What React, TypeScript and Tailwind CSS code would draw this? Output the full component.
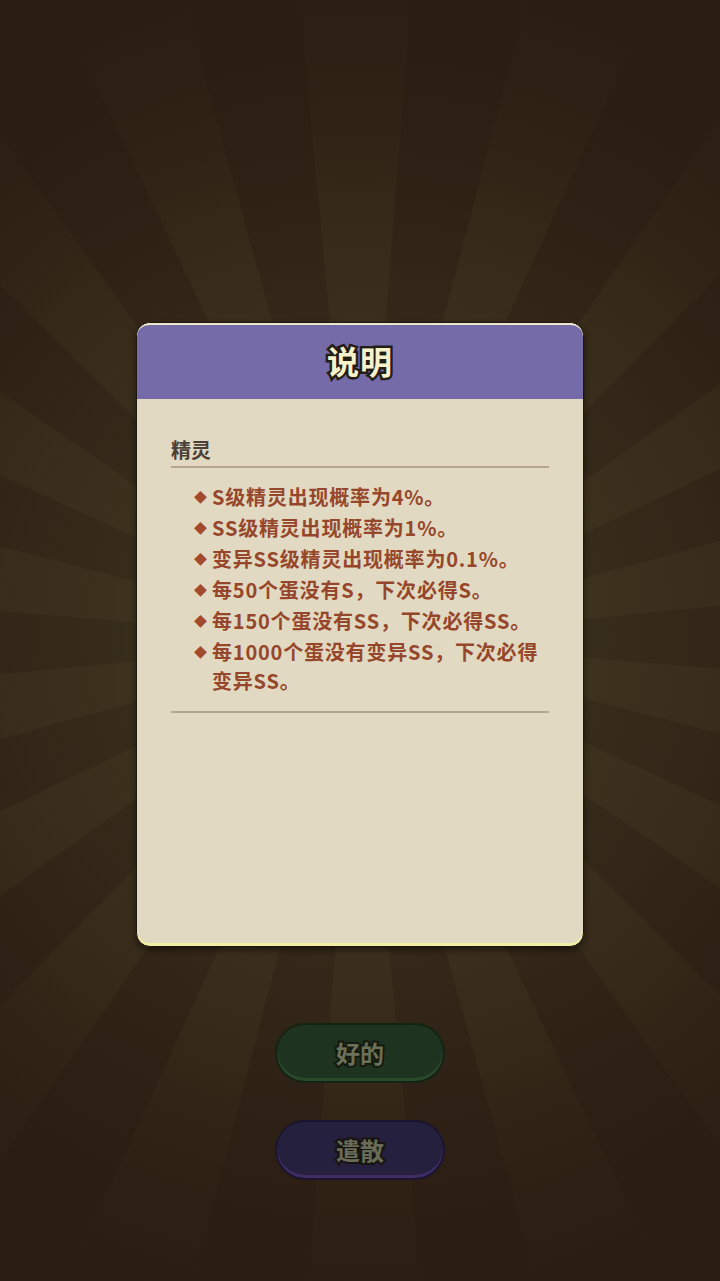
const rules = [
  "S级精灵出现概率为4%。",
  "SS级精灵出现概率为1%。",
  "变异SS级精灵出现概率为0.1%。",
  "每50个蛋没有S，下次必得S。",
  "每150个蛋没有SS，下次必得SS。",
  "每1000个蛋没有变异SS，下次必得变异SS。",
];

const Rays = () => {
  const cx = 360;
  const cy = 640;
  const count = 18;
  const rays = [];
  for (let i = 0; i < count; i++) {
    const a0 = (i / count) * Math.PI * 2 + 0.08;
    const a1 = a0 + (Math.PI * 2) / count / 2;
    const r = 1600;
    rays.push(
      <polygon
        key={i}
        points={`${cx},${cy} ${cx + r * Math.cos(a0)},${cy + r * Math.sin(a0)} ${cx + r * Math.cos(a1)},${cy + r * Math.sin(a1)}`}
        fill="#625a34"
        opacity="0.18"
      />
    );
  }
  return (
    <svg className="absolute inset-0 w-full h-full" viewBox="0 0 720 1281" preserveAspectRatio="none">
      <defs>
        <radialGradient id="glow" cx="360" cy="640" r="640" gradientUnits="userSpaceOnUse">
          <stop offset="0" stopColor="#423b22" />
          <stop offset="0.55" stopColor="#352a1a" />
          <stop offset="1" stopColor="#2b1d12" />
        </radialGradient>
        <radialGradient id="fade" cx="360" cy="640" r="680" gradientUnits="userSpaceOnUse">
          <stop offset="0" stopColor="#2b1d12" stopOpacity="0" />
          <stop offset="0.6" stopColor="#2b1d12" stopOpacity="0.3" />
          <stop offset="0.9" stopColor="#2b1d12" stopOpacity="0.85" />
          <stop offset="1" stopColor="#2b1d12" stopOpacity="1" />
        </radialGradient>
      </defs>
      <rect width="720" height="1281" fill="url(#glow)" />
      {rays}
      <rect width="720" height="1281" fill="url(#fade)" />
    </svg>
  );
};

const App = () => {
  return (
    <main className="relative w-[720px] h-[1281px] overflow-hidden bg-[#2e2114] font-['Noto_Sans_CJK_SC',sans-serif]">
      <Rays />
      <div className="relative flex flex-col items-center pt-[322px]">
        <section className="w-[448px] h-[625px] rounded-[14px] border border-[#1e170d] bg-[#f4eda6] pb-[3px] shadow-[0_3px_6px_rgba(0,0,0,0.45)] overflow-hidden">
          <div className="h-full rounded-[13px] overflow-hidden flex flex-col bg-[#e2d9c2]">
            <header className="h-[76px] shrink-0 bg-[#766ba9] border-t-2 border-[#ece6cf] rounded-t-[13px] flex items-center justify-center">
              <h1 className="text-[32px] font-bold leading-none text-[#f7f2c9] [paint-order:stroke_fill] [-webkit-text-stroke:5px_#231d16] tracking-[1px] -mt-[4px]">
                说明
              </h1>
            </header>
            <div className="flex-1 px-[34px] pt-[37px]">
              <h2 className="text-[20px] font-bold leading-[28px] text-[#4a4036]">精灵</h2>
              <div className="mt-[2px] h-[2px] bg-[#b6a68d]" />
              <ul className="pt-[14px] pl-[23px] pb-[14px]">
                {rules.map((r) => (
                  <li key={r} className="flex text-[20px] font-bold leading-[29px] tracking-[0.8px] mb-[2px] text-[#96472b]">
                    <span className="w-[18px] shrink-0 text-[13px] text-[#a24a2b] leading-[29px]">◆</span>
                    <span>{r}</span>
                  </li>
                ))}
              </ul>
              <div className="h-[2px] bg-[#b6a68d]" />
            </div>
          </div>
        </section>

        <button className="mt-[76px] w-[170px] h-[60px] rounded-full bg-[#1e3420] border-2 border-[#152313] shadow-[inset_0_-3px_0_#2b4a2b] flex items-center justify-center">
          <span className="text-[24px] font-bold text-[#6a7158] [paint-order:stroke_fill] [-webkit-text-stroke:4px_#151a0f]">好的</span>
        </button>
        <button className="mt-[37px] w-[170px] h-[60px] rounded-full bg-[#26203f] border-2 border-[#1b1530] shadow-[inset_0_-3px_0_#3f2c63] flex items-center justify-center">
          <span className="text-[24px] font-bold text-[#696c58] [paint-order:stroke_fill] [-webkit-text-stroke:4px_#17140f]">遣散</span>
        </button>
      </div>
    </main>
  );
};

export default App;
